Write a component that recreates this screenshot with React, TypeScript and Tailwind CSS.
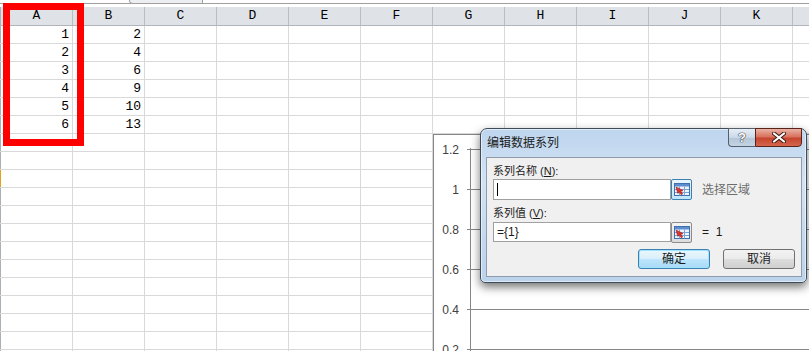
import React from "react";

const cols = ["A", "B", "C", "D", "E", "F", "G", "H", "I", "J", "K", ""];
const data: (number | string)[][] = [
  [1, 2],
  [2, 4],
  [3, 6],
  [4, 9],
  [5, 10],
  [6, 13],
];
const rows = Array.from({ length: 19 }, (_, i) => data[i] ?? []);

const ui = "font-['Liberation_Sans','Noto_Sans_CJK_SC',sans-serif]";

const RangeIcon = () => (
  <svg width="16" height="13" viewBox="0 0 16 13">
    <rect x="0.5" y="0.5" width="15" height="12" fill="#eef4fb" stroke="#3f6fae" />
    <rect x="1" y="1" width="14" height="2.5" fill="#5d8fcf" />
    <path d="M1 6.5H15M1 9.5H15M5.5 3.5V12.5M10.5 3.5V12.5" stroke="#7ea3d3" strokeWidth="1" />
    <path d="M2 4 L9 7.5 L6.8 8.3 L8.6 11 L7.2 11.8 L5.5 9 L3.8 10.4 Z" fill="#e0332b" stroke="#9c1b14" strokeWidth="0.6" />
  </svg>
);

const RangeButton = ({ active }: { active?: boolean }) => (
  <div
    className={`w-[21px] h-[21px] shrink-0 flex items-center justify-center rounded-[2px] border ${
      active
        ? "border-[#3c7fb1] bg-[linear-gradient(180deg,#eaf6fd,#bee6fd)]"
        : "border-[#8c8c8c] bg-[linear-gradient(180deg,#f4f4f4,#dcdcdc)]"
    }`}
  >
    <RangeIcon />
  </div>
);

const Chart = () => {
  const ticks = [
    { y: 14, label: "1.2" },
    { y: 54, label: "1" },
    { y: 94, label: "0.8" },
    { y: 134, label: "0.6" },
    { y: 174, label: "0.4" },
    { y: 214, label: "0.2" },
  ];
  return (
    <div className="absolute left-[433px] top-[134px] w-[400px] h-[230px] bg-white border border-[#868686]">
      <svg width="400" height="230" className="block">
        <line x1="36.5" y1="13" x2="36.5" y2="230" stroke="#868686" />
        {ticks.map((t) => (
          <g key={t.label}>
            <line x1="33" y1={t.y + 0.5} x2="400" y2={t.y + 0.5} stroke="#868686" />
            <text
              x="25"
              y={t.y + 4.5}
              textAnchor="end"
              fontSize="12"
              fill="#404040"
              fontFamily="Liberation Sans, Arial, sans-serif"
            >
              {t.label}
            </text>
          </g>
        ))}
      </svg>
    </div>
  );
};

const Dialog = () => (
  <div
    className={`absolute left-[480px] top-[128px] w-[327px] h-[155px] rounded-t-[7px] rounded-b-[5px] border border-[#3e4b58] bg-[linear-gradient(180deg,#bed5ee_0%,#d3e3f4_35%,#c4d9ef_70%,#bcd3ec_100%)] shadow-[0_4px_10px_rgba(0,0,0,0.55),inset_0_0_0_1px_rgba(255,255,255,0.55)] ${ui}`}
  >
    <div className="relative h-[28px] flex items-center pl-[6px] text-[12px] text-[#1b1b1b]">
      编辑数据系列
      <div className="absolute top-[-1px] right-[4px] flex h-[19px]">
        <div className="w-[27px] h-full flex items-center justify-center border border-[#55606c] border-r-0 rounded-bl-[4px] bg-[linear-gradient(180deg,#e6eef7_0%,#cad8e7_50%,#b3c5d8_51%,#c4d4e4_100%)]">
          <span className="text-[13px] font-bold text-white leading-none [text-shadow:0_0_1px_#333,0_0_1px_#333,0_0_1px_#333]">?</span>
        </div>
        <div className="w-[47px] h-full flex items-center justify-center border border-[#5b2318] rounded-br-[4px] bg-[linear-gradient(180deg,#eab3a6_0%,#d9715d_45%,#c6452f_55%,#d4654c_100%)]">
          <svg width="14" height="11" viewBox="0 0 14 11">
            <path d="M2 1.5 L12 9.5 M12 1.5 L2 9.5" stroke="#3a1a14" strokeWidth="4" strokeLinecap="round" />
            <path d="M2 1.5 L12 9.5 M12 1.5 L2 9.5" stroke="#ffffff" strokeWidth="2.2" strokeLinecap="round" />
          </svg>
        </div>
      </div>
    </div>
    <div className="ml-[5px] mr-[4px] h-[120px] border border-[#8e9cad] bg-[#f0f0f0] pl-[6px] flex flex-col text-[12px] text-[#1b1b1b]">
      <div className="mt-[6px] h-[15px] leading-[15px] text-[11px]">
        系列名称 (<span className="underline">N</span>):
      </div>
      <div className="flex items-center h-[21px]">
        <div className="w-[178px] h-[21px] border border-[#a0a0a0] bg-white flex items-center pl-[3px]">
          <div className="w-px h-[13px] bg-black" />
        </div>
        <RangeButton active />
        <span className="ml-[10px] text-[#6d6d6d]">选择区域</span>
      </div>
      <div className="mt-[6px] h-[15px] leading-[15px] text-[11px]">
        系列值 (<span className="underline">V</span>):
      </div>
      <div className="mt-px flex items-center h-[20px]">
        <div className="w-[178px] h-[20px] border border-[#a0a0a0] bg-white flex items-center pl-[3px]">
          ={"{"}1{"}"}
        </div>
        <RangeButton />
        <span className="ml-[10px]">= &nbsp;1</span>
      </div>
      <div className="mt-[7px] flex justify-end gap-[13px] pr-[6px]">
        <div className="w-[72px] h-[20px] rounded-[3px] border border-[#3c7fb1] bg-[linear-gradient(180deg,#eaf6fd_0%,#d9f0fc_50%,#bee6fd_51%,#a7d9f5_100%)] shadow-[inset_0_0_0_1px_#9fe4fc] flex items-center justify-center">
          确定
        </div>
        <div className="w-[72px] h-[20px] rounded-[3px] border border-[#707070] bg-[linear-gradient(180deg,#f2f2f2_0%,#ebebeb_50%,#dddddd_51%,#cfcfcf_100%)] flex items-center justify-center">
          取消
        </div>
      </div>
    </div>
  </div>
);

export default function App() {
  return (
    <div className="relative w-[809px] h-[351px] overflow-hidden bg-white font-['Liberation_Mono',monospace] text-[13px] text-black">
      <div className="h-[3px]" />
      <div className="h-px bg-[#a0a0a0]" />
      <div className="h-[3px]" />
      <div className="flex h-[19px] bg-[#dfe3e8] border-b border-[#b1b5ba]">
        {cols.map((c, i) => (
          <div
            key={i}
            className={`${i === 0 ? "w-[73px] border-l border-l-[#a9b0b8]" : "w-[72px]"} shrink-0 border-r border-[#b9bec5] flex items-center justify-center leading-[18px]`}
          >
            {c}
          </div>
        ))}
      </div>
      {rows.map((r, ri) => (
        <div key={ri} className="flex h-[18px] border-b border-[#d9d9d9]">
          {cols.map((_, ci) => (
            <div
              key={ci}
              className={`${
                ci === 0
                  ? `w-[73px] border-l ${ri === 8 ? "border-l-[#e3a21a]" : "border-l-[#a9b0b8]"}`
                  : "w-[72px]"
              } shrink-0 border-r border-[#d9d9d9] text-right pr-[3px] leading-[18px]`}
            >
              {r[ci] ?? ""}
            </div>
          ))}
        </div>
      ))}

      {/* sheet tab stub at the top */}
      <div className="absolute left-[129px] top-0 w-[74px] h-[4px] bg-[#eceef1] border-x border-b border-[#a0a0a0] rounded-bl-[6px]" />

      {/* red highlight around column A */}
      <div className="absolute left-[3px] top-[3px] w-[81px] h-[143px] border-[7px] border-[#ff0000]" />

      <Chart />
      <Dialog />
    </div>
  );
}
